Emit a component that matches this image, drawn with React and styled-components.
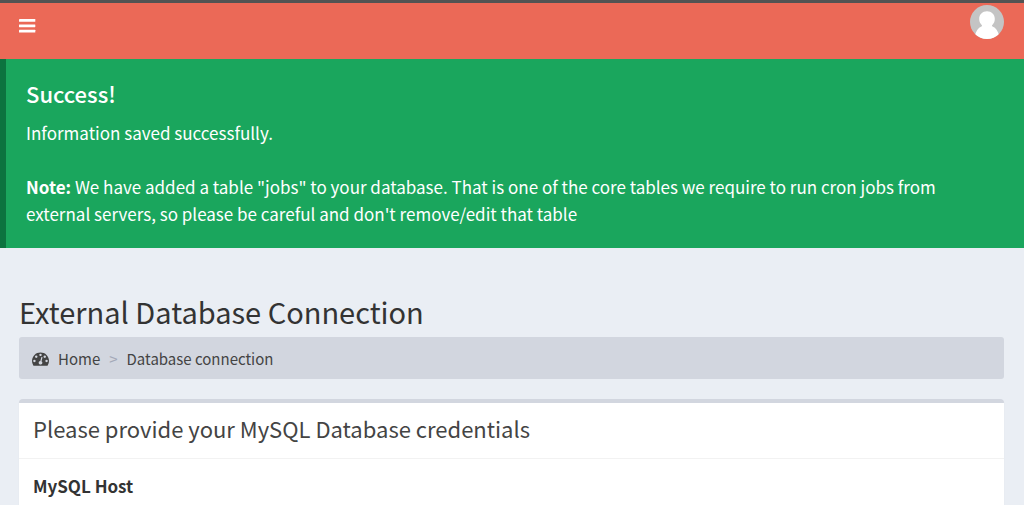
import React from "react";
import styled, { createGlobalStyle } from "styled-components";

function App() {
  return (
    <Page>
      <GlobalStyle />
      <Header>
        <MenuButton type="button" aria-label="Toggle navigation">
          <BarsIcon />
        </MenuButton>
        <UserButton type="button" aria-label="User account">
          <AvatarIcon />
        </UserButton>
      </Header>
      <Callout role="status">
        <CalloutTitle>Success!</CalloutTitle>
        <CalloutText>Information saved successfully.</CalloutText>
        <CalloutText $spaced>
          <strong>Note:</strong> We have added a table "jobs" to your database.
          That is one of the core tables we require to run cron jobs from
          external servers, so please be careful and don't remove/edit that
          table
        </CalloutText>
      </Callout>
      <Content>
        <Title>External Database Connection</Title>
        <Breadcrumb aria-label="Breadcrumb">
          <HomeLink href="#">
            <DashboardIcon />
            Home
          </HomeLink>
          <Separator>&gt;</Separator>
          <span>Database connection</span>
        </Breadcrumb>
        <Box>
          <BoxHeader>
            <BoxTitle>Please provide your MySQL Database credentials</BoxTitle>
          </BoxHeader>
          <BoxBody>
            <Label htmlFor="mysql-host">MySQL Host</Label>
            <Input id="mysql-host" type="text" />
          </BoxBody>
        </Box>
      </Content>
    </Page>
  );
}

export default App;

function BarsIcon() {
  return (
    <svg width="17" height="14" viewBox="0 0 17 14" fill="currentColor">
      <rect x="0" y="0" width="16.300" height="2.800" rx="0.4" />
      <rect x="0" y="5.400" width="16.300" height="2.800" rx="0.4" />
      <rect x="0" y="10.800" width="16.300" height="2.800" rx="0.4" />
    </svg>
  );
}

function AvatarIcon() {
  return (
    <svg width="34" height="34" viewBox="0 0 34 34">
      <clipPath id="avatar">
        <circle cx="17" cy="17" r="17" />
      </clipPath>
      <g clipPath="url(#avatar)">
        <rect width="34" height="34" fill="#c4c4c4" />
        <path
          fill="#fff"
          d="M17 6.300c4.500 0 7.800 3.200 7.800 7.700 0 2.800-1.100 4.700-2.500 5.900-.6.600-.4 1.200.3 1.500 3.300 1.400 5.200 4.300 6.400 8.600V34H5v-4c1.200-4.300 3.100-7.200 6.400-8.600.7-.3.900-.9.3-1.500-1.400-1.200-2.500-3.100-2.500-5.900 0-4.500 3.300-7.700 7.800-7.700z"
        />
      </g>
    </svg>
  );
}

function DashboardIcon() {
  return (
    <svg width="17" height="17" viewBox="0 0 1792 1792" fill="currentColor">
      <path d="M384 1152q0-53-37.500-90.500t-90.500-37.500-90.500 37.500-37.500 90.500 37.500 90.500 90.500 37.500 90.500-37.500 37.500-90.500zm192-448q0-53-37.500-90.500t-90.500-37.500-90.500 37.500-37.500 90.500 37.500 90.500 90.500 37.500 90.500-37.500 37.500-90.500zm428 481l101-382q6-26-7.500-48.500t-38.500-29.500-48 6.500-30 39.500l-101 382q-60 5-107 43.500t-63 98.500q-20 77 20 146t117 89 146-20 89-117q16-60-6-117t-72-91zm660-33q0-53-37.500-90.500t-90.500-37.500-90.500 37.500-37.500 90.500 37.500 90.500 90.500 37.500 90.500-37.500 37.500-90.500zm-640-640q0-53-37.500-90.500t-90.500-37.500-90.500 37.500-37.500 90.500 37.500 90.500 90.500 37.500 90.500-37.500 37.500-90.500zm448 192q0-53-37.500-90.500t-90.500-37.500-90.500 37.500-37.500 90.500 37.500 90.500 90.500 37.500 90.500-37.500 37.500-90.500zm320 448q0 261-141 483-19 29-54 29h-1402q-35 0-54-29-141-221-141-483 0-182 71-348t191-286 286-191 348-71 348 71 286 191 191 286 71 348z" />
    </svg>
  );
}

const GlobalStyle = createGlobalStyle`
  * {
    box-sizing: border-box;
  }
  html {
    scrollbar-width: none;
  }
  body {
    margin: 0;
    background-color: #eaeef4;
    color: #333;
    font-family: "Noto Sans CJK SC", "Open Sans", sans-serif;
    font-size: 17px;
    line-height: 27px;
  }
`;

const Page = styled.div`
  display: flex;
  flex-direction: column;
`;

const Header = styled.header`
  display: flex;
  justify-content: space-between;
  align-items: flex-start;
  height: 59px;
  padding: 2px 20px 0 19px;
  border-top: 3px solid #535353;
  background-color: #eb6957;
`;

const MenuButton = styled.button`
  display: flex;
  padding: 14px 0;
  border: 0;
  background: none;
  color: white;
`;

const UserButton = styled.button`
  display: flex;
  padding: 0;
  border: 0;
  background: none;
`;

const Callout = styled.section`
  padding: 20px 60px 21px 20px;
  border-left: 6px solid #0c733f;
  background-color: #1aa65d;
  color: white;
`;

const CalloutTitle = styled.h4`
  margin: 0 0 12px;
  font-size: 22px;
  font-weight: 500;
  line-height: 28px;
`;

const CalloutText = styled.p`
  margin: ${(props) => (props.$spaced ? "27px 0 0" : "0")};
`;

const Content = styled.main`
  padding: 43px 20px 20px 19px;
`;

const Title = styled.h1`
  margin: 0 0 6px;
  font-size: 29px;
  font-weight: 400;
  line-height: 40px;
`;

const Breadcrumb = styled.nav`
  display: flex;
  align-items: center;
  gap: 9px;
  padding: 8px 13px 7px;
  border-radius: 3px;
  background-color: #d2d6df;
  color: #444;
  font-size: 15px;
`;

const HomeLink = styled.a`
  display: flex;
  align-items: center;
  gap: 9px;
  color: #444;
  text-decoration: none;
`;

const Separator = styled.span`
  color: #a4a9b8;
`;

const Box = styled.section`
  margin-top: 20px;
  border-top: 4px solid #d2d6df;
  border-radius: 4px;
  background-color: white;
  box-shadow: 0 1px 1px rgba(0, 0, 0, 0.1);
`;

const BoxHeader = styled.div`
  padding: 11px 14px 16px;
  border-bottom: 1px solid #f2f2f2;
`;

const BoxTitle = styled.h3`
  margin: 0;
  color: #444;
  font-size: 22px;
  font-weight: 400;
  line-height: 28px;
`;

const BoxBody = styled.div`
  padding: 13px 14px;
`;

const Label = styled.label`
  display: block;
  margin-bottom: 7px;
  font-weight: 700;
`;

const Input = styled.input`
  width: 100%;
  height: 46px;
  padding: 8px 16px;
  border: 1px solid #d2d6de;
  color: #555;
  font: inherit;
`;
